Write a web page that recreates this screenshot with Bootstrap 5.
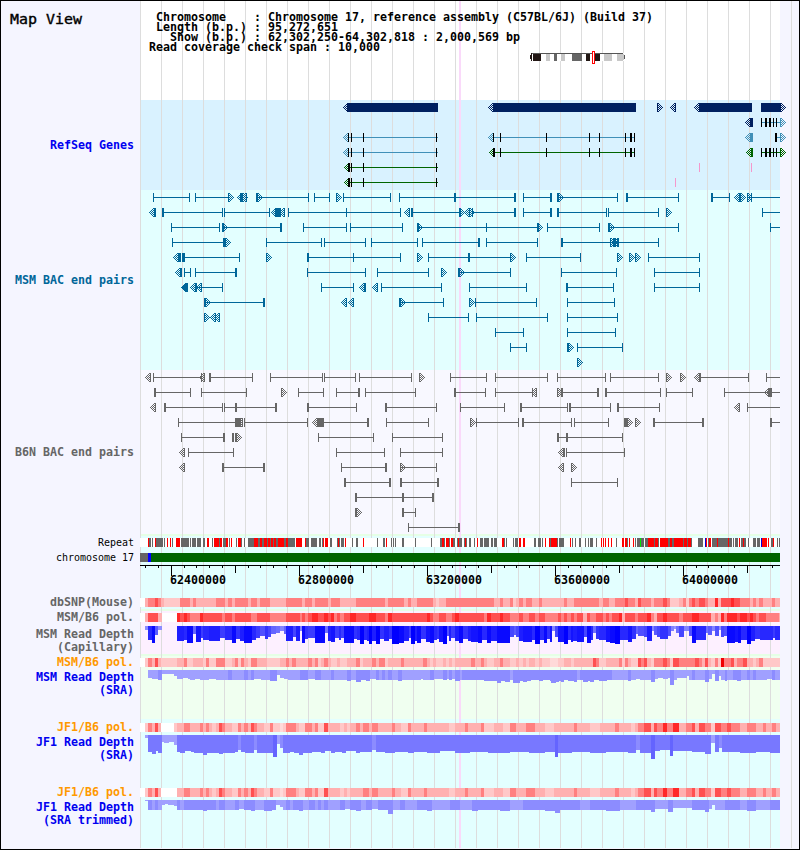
<!DOCTYPE html>
<html lang="en">
<head>
  <meta charset="UTF-8">
  <title>Map View</title>
  <meta name="viewport" content="width=device-width, initial-scale=1">
  <link href="https://cdn.jsdelivr.net/npm/bootstrap@5.3.3/dist/css/bootstrap.min.css" rel="stylesheet">
  <style>
    body {
      font-family: "DejaVu Sans Mono", monospace;
      font-size: 11.63px;
      font-weight: bold;
      line-height: 13px;
      color: #000;
    }
    .map-view {
      width: 800px;
      height: 850px;
      border: 1px solid #000;
      background: #f5f5ff;
    }
    .track-label {
      width: 139px;
      padding-right: 6px;
    }
    .plot {
      --seam: transparent;
      width: 659px;
      background:
        linear-gradient(#fad9fa, #fad9fa) 319px 0 / 2px 100% no-repeat,
        linear-gradient(90deg, #ddd 1px, transparent 1px) 0 0 / 21px 100%,
        linear-gradient(#f5f5ff, #f5f5ff) 640px 0 / 19px 100% no-repeat,
        linear-gradient(var(--seam), var(--seam)) 0 0 / 100% 2px no-repeat;
      background-color: var(--fill);
    }
    .plot svg { display: block; overflow: visible; }
    .fill-white { --fill: #fff; }
    .fill-gene { --fill: #d9f2ff; }
    .fill-cyan { --fill: #e3ffff; }
    .fill-ghost { --fill: #f8f8ff; }
    .fill-pink { --fill: #fdf0ff; }
    .fill-green { --fill: #f0fff0; }
    .seam { --seam: #e6ffe6; }
    .title-text { font-size: 14.95px; font-weight: normal; -webkit-text-stroke: 0.4px #000; padding: 12px 0 0 9px; }
    .info-text { font: inherit; line-height: 10px; margin: 0; padding: 11px 0 0 9px; overflow: visible; }
    .thin-text { font-size: 9.97px; font-weight: normal; }
    .pol-text { padding-top: 2px; }
    .c-blue { color: #0000f0; }
    .c-teal { color: #069; }
    .c-gray { color: #666; }
    .c-orange { color: #ff9900; }
  </style>
</head>
<body>
  <div class="map-view d-flex flex-column overflow-hidden">

    <!-- Header -->
    <div class="d-flex" style="height:99px">
      <div class="track-label title-text">Map View</div>
      <div class="plot fill-white">
<pre class="info-text"> Chromosome    : Chromosome 17, reference assembly (C57BL/6J) (Build 37)
 Length (b.p.) : 95,272,651
   Show (b.p.) : 62,302,250-64,302,818 : 2,000,569 bp
Read coverage check span : 10,000</pre>
        <svg id="ideogram" width="640" height="14" shape-rendering="crispEdges">
          <rect x="391" y="1" width="93" height="8" fill="#fff"/>
          <path d="M390 3h1v4h-1zM391 1h1v8h-1zM393 1h8v8h-8zM446 1h4v8h-4zM455 1h5v8h-5z" fill="#231815"/>
          <path d="M406 1h4v8h-4zM421 1h4v8h-4zM464 1h8v8h-8zM477 1h6v8h-6zM483 2h1v6h-1z" fill="#c8c8c8"/>
          <path d="M414 1h3v8h-3zM432 1h10v8h-10z" fill="#666"/>
          <path d="M392 1h91v1h-91zM484 3h1v4h-1z" fill="#555"/>
          <rect x="452.5" y="-.5" width="2" height="12" fill="#fff" stroke="#f00"/>
        </svg>
      </div>
    </div>

    <!-- Features -->
    <div class="d-flex" style="height:90px">
      <div class="track-label c-blue d-flex align-items-center justify-content-end">RefSeq Genes</div>
      <div class="plot fill-gene"><svg id="genes" width="640" height="90" shape-rendering="crispEdges"></svg></div>
    </div>
    <div class="d-flex" style="height:180px">
      <div class="track-label c-teal d-flex align-items-center justify-content-end">MSM BAC end pairs</div>
      <div class="plot fill-cyan"><svg id="msmBac" width="640" height="180" shape-rendering="crispEdges"></svg></div>
    </div>
    <div class="d-flex" style="height:164px">
      <div class="track-label c-gray d-flex align-items-center justify-content-end">B6N BAC end pairs</div>
      <div class="plot fill-ghost"><svg id="b6nBac" width="640" height="164" shape-rendering="crispEdges"></svg></div>
    </div>

    <!-- Chromosome and scale -->
    <div class="d-flex" style="height:16px">
      <div class="track-label thin-text d-flex align-items-center justify-content-end">Repeat</div>
      <div class="plot fill-cyan seam"><svg id="repeat" width="640" height="16" shape-rendering="crispEdges"></svg></div>
    </div>
    <div class="d-flex" style="height:15px">
      <div class="track-label thin-text d-flex align-items-center justify-content-end">chromosome 17</div>
      <div class="plot fill-cyan">
        <svg width="640" height="15" shape-rendering="crispEdges">
          <rect x="0" y="3" width="8" height="9" fill="#666"/>
          <rect x="8" y="3" width="3" height="9" fill="#00f"/>
          <rect x="11" y="3" width="629" height="9" fill="#006400"/>
        </svg>
      </div>
    </div>
    <div class="d-flex" style="height:30px">
      <div class="track-label"></div>
      <div class="plot fill-cyan"><svg id="scale" width="640" height="30"></svg></div>
    </div>

    <!-- Density and read depth -->
    <div class="d-flex" style="height:14px">
      <div class="track-label c-gray d-flex align-items-center justify-content-end">dbSNP(Mouse)</div>
      <div class="plot fill-cyan"><svg id="dbsnp" width="640" height="14" shape-rendering="crispEdges"></svg></div>
    </div>
    <div class="d-flex" style="height:15px">
      <div class="track-label pol-text c-gray text-end">MSM/B6 pol.</div>
      <div class="plot fill-pink seam"><svg id="msmPol" width="640" height="15" shape-rendering="crispEdges"></svg></div>
    </div>
    <div class="d-flex" style="height:30px">
      <div class="track-label c-gray text-end pt-1">MSM Read Depth<br>(Capillary)</div>
      <div class="plot fill-pink"><svg id="capDepth" width="640" height="30" shape-rendering="crispEdges"></svg></div>
    </div>
    <div class="d-flex" style="height:15px">
      <div class="track-label pol-text c-orange text-end">MSM/B6 pol.</div>
      <div class="plot fill-green seam"><svg id="sraPol" width="640" height="15" shape-rendering="crispEdges"></svg></div>
    </div>
    <div class="d-flex" style="height:50px">
      <div class="track-label c-blue text-end" style="padding-top:2px">MSM Read Depth<br>(SRA)</div>
      <div class="plot fill-green"><svg id="sraDepth" width="640" height="50" shape-rendering="crispEdges"></svg></div>
    </div>
    <div class="d-flex" style="height:15px">
      <div class="track-label pol-text c-orange text-end">JF1/B6 pol.</div>
      <div class="plot fill-cyan"><svg id="jfPol" width="640" height="15" shape-rendering="crispEdges"></svg></div>
    </div>
    <div class="d-flex" style="height:50px">
      <div class="track-label c-blue text-end" style="padding-top:2px">JF1 Read Depth<br>(SRA)</div>
      <div class="plot fill-cyan"><svg id="jfDepth" width="640" height="50" shape-rendering="crispEdges"></svg></div>
    </div>
    <div class="d-flex" style="height:15px">
      <div class="track-label pol-text c-orange text-end">JF1/B6 pol.</div>
      <div class="plot fill-cyan"><svg id="trimPol" width="640" height="15" shape-rendering="crispEdges"></svg></div>
    </div>
    <div class="d-flex" style="height:49px">
      <div class="track-label c-blue text-end" style="padding-top:2px">JF1 Read Depth<br>(SRA trimmed)</div>
      <div class="plot fill-cyan"><svg id="trimDepth" width="640" height="49" shape-rendering="crispEdges"></svg></div>
    </div>
  </div>

  <script src="https://cdn.jsdelivr.net/npm/bootstrap@5.3.3/dist/js/bootstrap.bundle.min.js"></script>
  <script>
    const LEFT = 140;
    const RIGHT = 780;

    function box(x, y, w, h, color) {
      return `<rect x="${x - LEFT}" y="${y}" width="${w}" height="${h}" fill="${color}"/>`;
    }

    // Dithered arrow head: solid edge, checkered body
    function arrow(x, cy, dir, color) {
      const half = [4, 4, 3, 2, 1, 0];
      let d = "";
      for (let i = 0; i < 6; i++) {
        const px = (dir > 0 ? x + i : x + 5 - i) - LEFT;
        for (let j = -half[i]; j <= half[i]; j++) {
          if (i === 0 || (i + j) % 2 !== 0) d += `M${px} ${cy + j}h1v1h-1z`;
        }
      }
      return `<path d="${d}" fill="${color}"/>`;
    }

    // a-b pair, ! = thick end, c = clipped end, <x >x arrows, |x tick, #a-b block, _a-b plain line
    function drawRow(text, cy, color, tickColor) {
      let out = "";
      text.split(" ").forEach(t => {
        let m;
        if (!t) return;
        if (t[0] === "<") out += arrow(+t.slice(1), cy, -1, color);
        else if (t[0] === ">") out += arrow(+t.slice(1), cy, 1, color);
        else if (t[0] === "|") {
          m = t.match(/(\d+)(!?)/);
          out += box(+m[1], cy - 4, m[2] ? 2 : 1, 9, tickColor || color);
        } else if (t[0] === "#") {
          m = t.match(/(\d+)-(\d+)/);
          out += box(+m[1], cy - 4, m[2] - m[1] + 1, 9, color);
        } else if (t[0] === "_") {
          m = t.match(/(\d+)-(\d+)/);
          out += box(+m[1], cy, m[2] - m[1] + 1, 1, color);
        } else {
          m = t.match(/^(\d+)(!?)-(\d+)([!c]?)$/);
          const a = +m[1], b = +m[3];
          out += box(a, cy, Math.min(b, RIGHT - 1) - a + 1, 1, color);
          out += box(a, cy - 4, m[2] ? 2 : 1, 9, color);
          if (m[4] !== "c") out += box(b, cy - 4, m[4] ? 2 : 1, 9, color);
        }
      });
      return out;
    }

    function drawPairs(id, rows, color) {
      document.getElementById(id).innerHTML = rows.map((r, i) => drawRow(r, 7 + i * 15, color)).join("");
    }

    const NAVY = "#002060", STEEL = "#4090b8", GREEN = "#006400", PINK = "#f598cc";
    const leftGene = "_348-437 |348 |351 |363 |436";
    const midGene = "_493-634 |493 |500 |546 |589 |599 |625 |630! |634";
    const endGene = "_761-779 |761 |765! |769! |773 |776 >780";
    const genes = [
      [0, NAVY, "<343 #347-437 <488 #493-635 >657 <670 <694 #699-751 #761-779 >780"],
      [1, NAVY, "<745 #750-752"],
      [1, STEEL, endGene],
      [2, STEEL, "<343 " + leftGene + " <488 " + midGene + " <745 #750-752 _776-779 |775! >780"],
      [3, STEEL, "<343 " + leftGene],
      [3, GREEN, "<489 " + midGene + " |494 <746 #751-752 " + endGene],
      [4, GREEN, "<344 " + leftGene + " |349"],
      [5, GREEN, "<344 " + leftGene + " |349"]
    ];
    document.getElementById("genes").innerHTML =
      genes.map(g => drawRow(g[2], 7 + g[0] * 15, g[1], "#000")).join("") +
      drawRow("|699 |751", 67, PINK) + drawRow("|675", 82, PINK);

    drawPairs("msmBac", [
      "153-189 195-228 >228 <237 #240-242 >242 <241 |246 256!-308 >257 314-329 >336 343-390 399-454! 454-514! 523-550! 557!-617 >558 626!-678 711!-729 <734 >740 |739 747-780c >747 |751",
      "<149 |154! 162!-222 224-269 <271 #275-280 <279 288-346 346-400 <404 411!-459 >459 <464 |460 >469 472-514! 523-550! 557!-606 608-658 >666 762-780c",
      "171-219 >222 |222! 223-280! 303-346 350-402 >417 |418 417-486 486-538 >537 |538 547-599 608!-678 >609 770-780c",
      "172-223! |225 >225 266-321 324-365 371-417 422-478! 486-537 561!-658 >610 #613-615 <613 |617!",
      "<173 #178-180 |182 |183! 184-239 >266 307!-353 353-400 >417 428-468! 469-510 >510 526-580 >617 >629 >635 648-699",
      "<175 |180! 184-190 195-235! 307-365 377-428 >441 458!-510 >459 561-616 654-699",
      "<181 <182 |186! <190 <196 196-222 321-353 <359 |364! <372 381-441 469-526 566!-613 654-699",
      "204!-263! >205 <341 <348 399!-443 >400 >469 475-536 567-614",
      ">204 <210 <214 |219 428-468 476-547 567-617",
      "495-523 567-615",
      "510-526 >568 |567 577-622",
      ">577"
    ], "#006699");

    drawPairs("b6nBac", [
      "<145 153-201 <199 209!-252 270-322 324-355 359-411 >419 450-486 495-547 557-605 610-658 >666 >680 <694 699!-748 766-780c",
      "154!-190 201-246 >281 298-323 336-358! 365-415 454!-485 495-532 <531 >557 561!-597! 605!-660 666-692 724-768 <764 770!-780c",
      "<150 164!-222 224-235 235!-275! 307!-356 385!-436 460-504 520!-567 569!-610 617!-659 <734 747-780c",
      "178-236 #235-240 <237 244-307 <312 #317-323 323-367! 386-428 >470 476-518 522!-571 574-608 #624-627 >627 >635 653!-702! 770!-780c",
      "181-223! |232! #235-236 >236 318-373 392-442 557!-566! 566!-622",
      "<179 188-233 336-384 400-442 <558 |563! 566-624",
      "<179 222!-263! 341-385! 400-436 >400 <558 >571",
      "344!-389! 400!-437! 571-617",
      "355!-402! 403-432!",
      ">356 |355! 402!-415",
      "408-458!"
    ], "#666666");

    // Run lists: "<start x><code>", each run lasts to the next start
    function drawRuns(id, text, colors, y) {
      const runs = text.trim().split(/\s+/).map(t => [parseInt(t), t.replace(/\d+/, "")]);
      let out = box(LEFT, y, RIGHT - LEFT, 9, "#fff");
      runs.forEach(([x, c], i) => {
        const end = i + 1 < runs.length ? runs[i + 1][0] : RIGHT;
        if (colors[c]) out += box(x, y, end - x, 9, colors[c]);
      });
      document.getElementById(id).innerHTML = out;
    }

    drawRuns("repeat", `
      148r 149g 151w 152g 153w 155r 156g 163w 164g 165w 167r 168w 170r 171w 172g 173w 176r 180w 181g 189w 190g 191w 192g 196w 197g
      201w 203g 205w 207r 209w 212g 213w 214r 219g 220r 222w 223g 226r 228w 229g 230w 231r 232w 236g 237w 238r 241g 242w 244g 245w
      248g 254r 258g 260r 262g 264r 267g 268r 270g 271r 273g 274r 276g 278r 284g 286r 288g 295w 296r 302w 305r 306g 309w 311g 317w
      319g 321w 322g 323r 324w 325r 328w 330g 332w 337g 338r 339g 340w 341g 344w 345r 346w 352g 353w 356g 358w 363r 364w 377g 378w
      383g 385w 386r 387w 391g 392w 393g 394w 395g 396w 402g 404w 415g 416w 431g 432w 440g 442r 444g 445w 446r 449g 450w 451r 453g
      455w 457g 458r 459g 462w 464g 465r 466g 467w 469g 471w 474g 475w 477r 478w 480g 483w 484g 489w 491g 493w 494g 497w 502r 504g
      505w 506g 507w 513g 514w 515g 518w 519r 521w 523r 525w 534g 536w 538g 541w 542g 543w 545r 546w 549r 550g 551r 557g 558w 559g
      564w 570r 571w 572g 573w 575g 576w 579g 581w 585g 586w 588g 589w 590g 593w 596g 597w 601r 602w 603r 604w 605r 606w 608r 609w
      611r 612w 616g 617w 622r 624w 625r 627g 628w 629r 630w 633r 634w 635g 636w 637g 640n 641g 644w 645g 648r 654g 655r 658g 659w
      660r 668g 670r 672g 674r 683g 684r 687g 688r 691g 692w 698g 703w 705b 706r 707w 708g 709r 711w 712g 717r 718g 728r 729g 732w
      733g 734w 735g 738w 739r 740w 741g 743r 744g 746w 748g 749w 753g 756w 757g 760w 761b 762r 767w 768r 769w 771g 773r 774w 777g
      778w 779g`, { r: "#f00", g: "#666", b: "#0000e0", n: "#00e600" }, 4);

    const reds = { a: "#ffd9d9", b: "#ffc8c8", c: "#ffb0b0", d: "#ff8080", e: "#ff5050", f: "#ff2828", g: "#f00000" };

    drawRuns("dbsnp", `
      145c 148d 155e 158d 161c 164b 180d 190c 193d 196c 216d 225c 228d 232c 235d 248c 251d 257c 260d 270c 286d 302c 305d 312c 315d
      328c 331d 340c 356d 385c 388d 404c 408d 411c 417d 433c 436b 439c 446d 494c 500d 503c 510d 513b 516c 519d 523c 526d 532c 539d
      542c 564d 567c 574d 599c 603d 609c 615d 625e 628d 635c 638e 641d 651c 654d 663e 667d 670b 679c 683d 686b 689d 692e 695d 699e
      705d 708c 715f 718c 721e 731f 734e 740d 750c 753d 756c 759d 763c 772d 775c`, reds, 3);

    drawRuns("msmPol", `
      145c 148e 158c 162w 177f 180e 184f 187e 190d 200f 203e 222d 225e 232d 235e 251d 257e 270d 286e 300d 302e 305d 308e 312f 318e
      324f 328e 331f 334d 337e 340d 344e 350f 356e 369f 376e 385d 388f 392e 427f 430e 433d 439e 446d 452e 455f 459e 484d 487f 491e
      500f 503e 510d 519e 523d 529e 535d 539e 545d 558e 561d 564e 567d 571e 574d 577e 583c 587e 590d 596e 603d 606e 609d 612e 619f
      622c 625e 635d 638e 647f 651d 654c 657e 663f 667e 679d 683e 692f 699e 711c 715d 718c 721f 724d 727f 737e 740f 747e 750f 753e
      756d 759e 766d 779c`, reds, 4);

    drawRuns("sraPol", `
      145b 148d 152c 155e 158c 161b 177c 184d 187b 193c 203b 206d 209b 216d 225b 232c 235d 238b 241d 244c 248b 251d 257c 267b 280c
      286d 289c 292d 296c 308d 312c 315d 318b 321c 324d 328c 331b 337c 340b 347c 356d 360b 363c 372d 376c 379d 385b 388c 401d 404c
      423d 427c 430b 433c 436b 443c 446b 449c 452b 455c 471d 475c 481d 484c 487b 494c 500d 503c 510b 516c 519b 523c 526b 529c 535b
      539c 542b 550a 558b 564c 571b 574c 593e 596d 599b 606c 619d 622b 625d 628c 631b 638e 641d 644e 647c 651b 654d 663e 667d 670b
      673e 679d 695e 699d 702c 705e 708c 711b 715d 718b 721g 724d 731e 734c 737d 743e 747c 753b 756c 759d 763b`, reds, 4);

    const jfLeft = `
      145b 148d 152c 155e 158c 161w 174b 177c 184d 190c 200d 203c 206d 209c 212b 216c 219e 222d 225c 232b 238d 241c 244d 248c 251e
      254d 257c 264b 270d 273b 280a 283b 286d 296c 299b 305d 312c 315d 318b 324e 328c 340b 344c 347b 350c`;
    const jfRight = `
      363d 369c 372d 378c 392d 395c 401b 408d 411c 424d 427c 449b 455c 465d 468c 481d 484b 494c 503b 510d 516c 526d 535c 545b 554c
      574d 577c 590b 600c 615d 619c 631b 635c 638d 644e 651c 654e 657d 663f 667d 673f 679c 686d 692e 695c 699e 705d 711b 715e 721d
      727e 731d 740c 747d 756c 763d 766c 772d 776c`;
    drawRuns("jfPol", jfLeft + " 356d 360c " + jfRight, reds, 4);
    drawRuns("trimPol", jfLeft.replace("161w 174b", "161w") + jfRight, reds, 4);

    // Depth bars: "x:height" with an optional colour code
    function drawDepth(id, text, y, colorOf) {
      const bars = text.trim().split(/\s+/).map(t => {
        const m = t.match(/(\d+):(\d+)(\w?)/);
        return [+m[1], +m[2], m[3]];
      });
      document.getElementById(id).innerHTML = bars.map(([x, h, c], i) => {
        const end = i + 1 < bars.length ? bars[i + 1][0] : RIGHT;
        return h ? box(x, y, end - x, h, colorOf(h, c)) : "";
      }).join("");
    }

    drawDepth("capDepth", `
      145:4 148:14 152:17 155:9 158:4 162:0 177:15 184:14 187:17 190:17 193:8 196:16 201:12 203:14 209:15 220:12 225:14 232:17 236:13
      240:15 244:17 252:14 256:12 260:10 265:13 268:11 271:8 276:7 280:5 284:8 286:15 293:11 296:15 300:5 302:17 305:13 308:12 315:17
      325:7 328:15 331:16 335:12 339:14 341:12 344:17 354:13 357:14 360:18 364:14 367:15 369:18 372:15 376:18 380:13 384:15 389:13
      392:18 399:17 404:15 409:12 411:18 415:15 417:17 421:13 426:16 430:17 434:14 437:13 439:16 443:18 447:10 449:15 451:12 455:15
      459:17 463:13 468:15 471:16 478:17 482:14 487:17 491:15 497:17 510:11 514:9 516:11 519:15 523:16 532:14 535:18 540:14 544:17
      547:13 550:16 552:5 555:11 558:16 564:18 568:14 571:16 573:15 577:16 584:11 587:17 591:14 593:7 596:13 599:14 606:16 610:17
      615:18 620:14 628:16 632:13 636:8 638:10 644:11 647:15 652:5 654:9 657:11 660:13 668:10 671:5 674:3 676:7 679:11 684:5 689:10
      692:17 696:14 706:7 708:9 712:5 715:10 719:4 721:11 724:10 727:17 735:16 738:17 741:14 747:18 751:15 755:13 760:14 773:12
      775:14`, 2, h => {
        const v = Math.max(0, (18 - h) * 10);
        return `rgb(${v},${v},255)`;
      });

    const blues = { "": "#a0a0ff", d: "#8c8cff", m: "#7878ff", k: "#6464ff" };
    const byCode = (h, c) => blues[c];

    drawDepth("sraDepth", `
      148:8 152:9 158:10d 162:4 174:6 177:9 183:8 188:9 190:10 195:9 200:10 209:9 216:10 228:10d 232:10 244:10d 248:10 251:10d 254:9
      261:10 270:11d 277:5 280:8 284:9 288:10 300:10d 308:9 315:10d 321:10 331:10d 334:10 347:11d 351:10 356:12d 361:10d 366:11d
      370:9 376:10d 379:10 382:10d 385:10 388:10d 392:10 398:11d 402:10 421:9 423:10 430:10d 434:9 443:10d 447:9 449:10d 452:9
      455:11d 460:10 462:10d 484:11d 497:13d 501:11d 505:12d 510:10 513:13d 520:11d 523:12d 527:11d 531:10d 539:11d 543:10d 550:11d
      551:13d 556:12d 559:11d 561:12d 564:10d 568:11d 574:12d 577:10 580:10d 583:12d 588:11d 590:12d 594:10d 599:11d 607:10d 612:10
      628:11d 631:10 636:9 640:10 651:12d 655:9 658:8 663:9 668:8 670:15d 674:10 677:8 687:6 689:10 692:10d 695:10 705:12d 709:9
      712:4 715:11d 719:6 721:10 725:11d 727:10 733:10d 737:11d 741:10 747:10d 750:10 753:10d 756:10 767:9 772:10d 775:10`, 1, byCode);

    drawDepth("jfDepth", `
      145:3 148:17m 152:19m 156:16m 158:18m 162:7 164:8 169:7 174:10 177:17m 180:18m 185:16m 191:17m 194:18m 203:20m 207:18m 219:19m
      223:18m 235:17m 238:15d 241:17m 245:18m 254:15d 257:18m 273:22k 277:9 280:13d 283:18m 290:17m 294:18m 299:20m 303:18m 312:17m
      321:18m 325:16m 331:18m 335:17m 342:18m 346:16m 356:18m 360:17m 372:15d 376:17m 385:18m 395:17m 408:18m 414:17m 427:18m
      440:16m 455:18m 470:17m 488:18m 510:17m 529:18m 545:17m 555:22k 558:18m 572:17m 590:18m 606:17m 628:18m 636:15d 640:18m
      651:24k 655:16m 660:15m 670:21k 673:16m 692:17m 705:19m 711:8 715:17m 719:13d 722:17m 740:18m 756:17m 770:18m`, 1, byCode);

    drawDepth("trimDepth", `
      145:1 148:10d 152:10 155:10d 158:10 162:5 165:4 168:5 174:6 177:10d 180:10 184:10d 203:11d 207:10d 216:10 219:10d 225:10
      235:10d 239:9 244:10d 251:11d 255:10 264:11d 272:10d 276:5 280:7 283:10 286:10d 290:10 293:10d 299:11d 303:10 309:10d 315:10
      318:10d 321:10 324:10d 328:10 340:10d 345:9 350:10d 356:11d 361:10 366:10d 372:9 378:10d 388:14d 393:10 400:10d 405:10
      417:10d 427:11d 432:10 450:10d 460:10 472:11d 478:10d 500:11d 510:10 523:10d 545:11d 555:13d 560:10d 580:10 590:10d 606:11d
      620:10 636:10d 651:12d 655:9 668:12d 673:8 692:10d 705:12d 709:9 712:5 715:10 725:10d 740:10 747:11d 756:10 770:10d`, 1, byCode);

    // Scale bar, one small tick per 40 kb
    let scale = `<rect x="0" y="0" width="640" height="1"/>`;
    for (let k = -2; k < 48; k++) {
      const x = Math.floor(171.2 + 12.8 * k) - LEFT;
      const h = k % 10 === 0 ? 10 : k % 5 === 0 ? 7 : 2;
      scale += `<rect x="${x}" y="1" width="1" height="${h}"/>`;
      if (k % 10 === 0) scale += `<text x="${x - 1}" y="19">${62400000 + k * 40000}</text>`;
    }
    document.getElementById("scale").innerHTML = scale;
  </script>
</body>
</html>
